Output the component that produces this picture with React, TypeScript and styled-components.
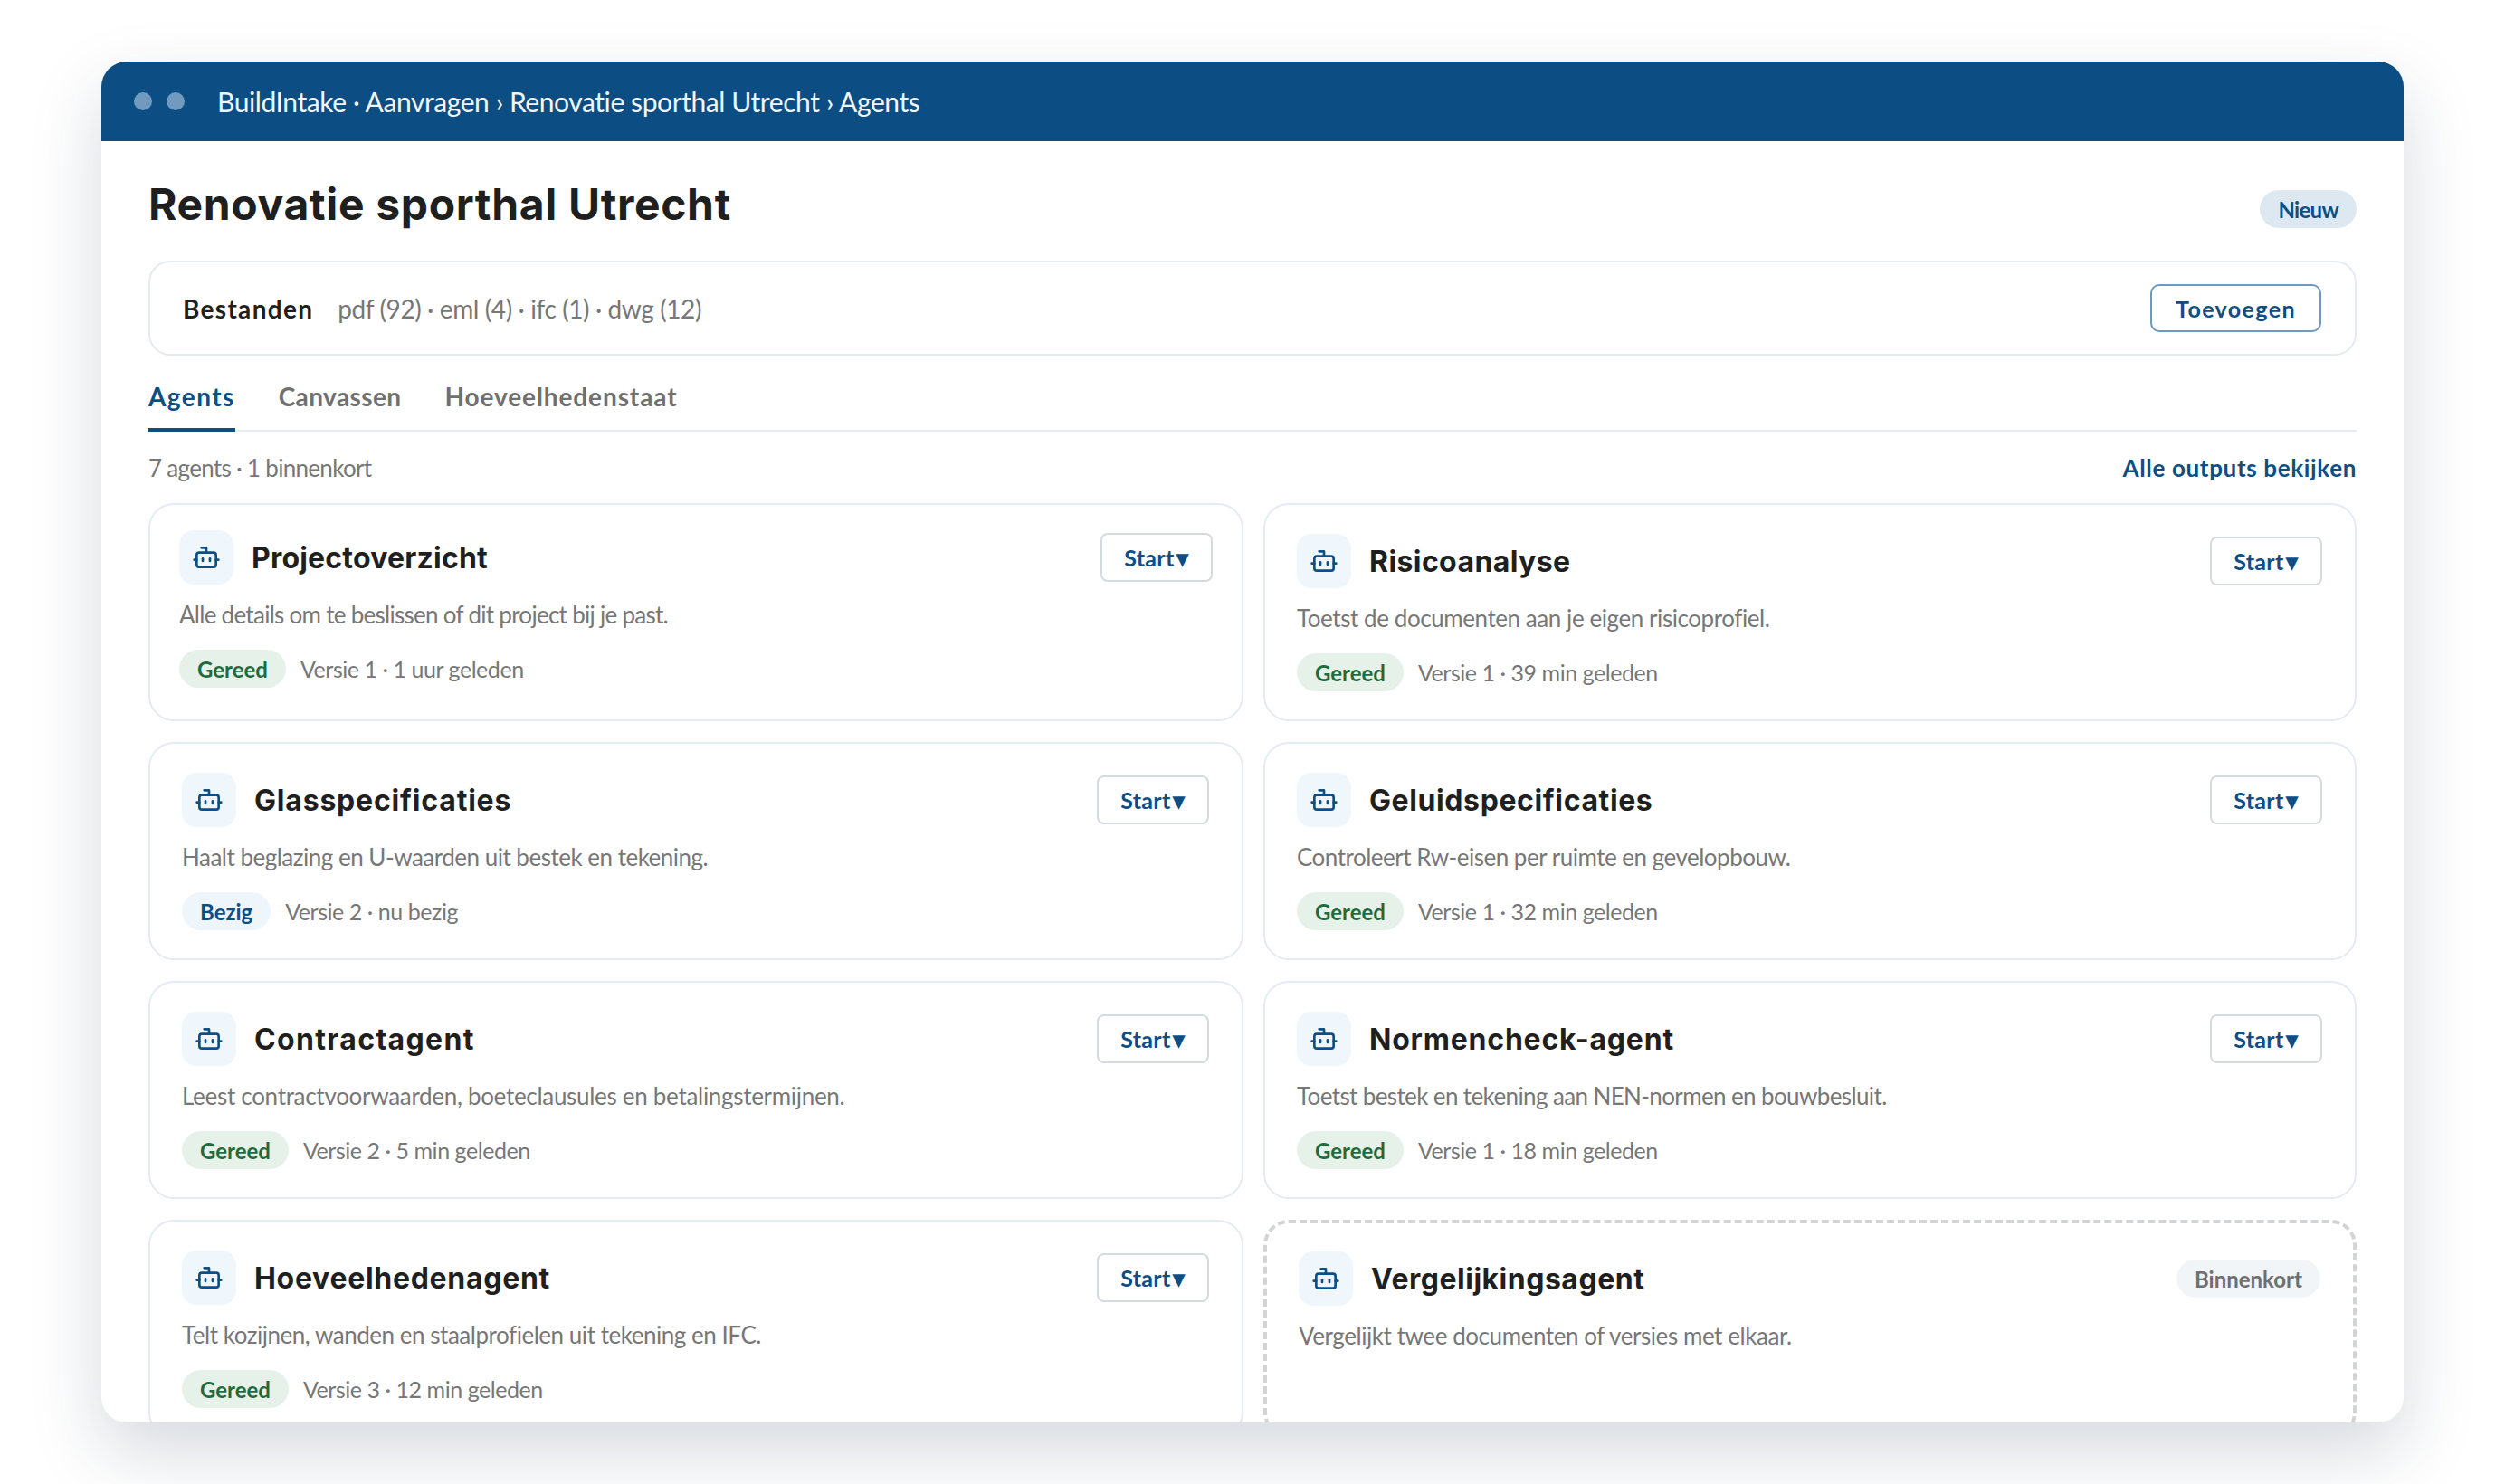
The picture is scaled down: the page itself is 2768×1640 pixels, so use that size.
import React from "react";
import styled, { createGlobalStyle } from "styled-components";
import { Bot } from "lucide-react";

const Global = createGlobalStyle`
  html, body { margin: 0; padding: 0; background: #fff; }
  body { font-family: "Lato", "Liberation Sans", sans-serif; }
  * { box-sizing: border-box; }
`;

const Page = styled.div`
  width: 2768px;
  height: 1640px;
  padding: 68px 112px;
  overflow: hidden;
  background: #fff;
`;

const Frame = styled.div`
  height: 1504px;
  border-radius: 28px;
  background: #fff;
  overflow: hidden;
  box-shadow: 0 32px 80px rgba(20, 45, 70, 0.18);
`;

const TitleBar = styled.header`
  height: 88px;
  background: #0c4e83;
  display: flex;
  align-items: center;
  padding: 0 36px;
  gap: 16px;
`;

const Dot = styled.span`
  width: 20px;
  height: 20px;
  border-radius: 50%;
  background: #719ac0;
`;

const Crumbs = styled.div`
  margin-left: 20px;
  font-size: 30px;
  letter-spacing: -0.42px;
  color: #f2f6fa;
`;

const Body = styled.main`
  padding: 0 52px;
`;

const TitleRow = styled.div`
  height: 132px;
  display: flex;
  align-items: center;
  justify-content: space-between;
`;

const Title = styled.h1`
  margin: 7px 0 0;
  font-family: "Inter", sans-serif;
  font-weight: 700;
  font-size: 48px;
  letter-spacing: 0.65px;
  color: #1f1f1f;
`;

const tones = {
  blue: { bg: "#dee8f1", fg: "#0d4f84" },
  sky: { bg: "#eef5fb", fg: "#0d4f84" },
  green: { bg: "#e6f1e9", fg: "#1f6b3d" },
  gray: { bg: "#f2f5f8", fg: "#6f6f6f" },
};

const Pill = styled.span<{ $tone: keyof typeof tones }>`
  height: 42px;
  padding: 0 20px;
  display: inline-flex;
  align-items: center;
  border-radius: 21px;
  font-size: 24px;
  font-weight: 700;
  background: ${(p) => tones[p.$tone].bg};
  color: ${(p) => tones[p.$tone].fg};
`;

const NewPill = styled(Pill)`
  margin-top: 18px;
  letter-spacing: -0.7px;
`;

const Files = styled.section`
  height: 105px;
  border: 2px solid #e5ebf2;
  border-radius: 24px;
  display: flex;
  align-items: center;
  padding: 0 37px 0 36px;
`;

const FilesLabel = styled.strong`
  font-size: 28px;
  font-weight: 700;
  letter-spacing: 1.3px;
  color: #1f1f1f;
`;

const FilesMeta = styled.span`
  margin-left: 27px;
  font-size: 28px;
  letter-spacing: -0.4px;
  color: #777;
  flex: 1;
`;

const AddButton = styled.button`
  width: 189px;
  height: 53px;
  background: #fff;
  border: 2px solid #6f98c0;
  border-radius: 10px;
  font: 700 25px "Lato", sans-serif;
  letter-spacing: 1.4px;
  color: #0d4f84;
  padding: 0;
`;

const Tabs = styled.nav`
  margin-top: 23px;
  height: 61px;
  display: flex;
  gap: 48px;
  border-bottom: 2px solid #e5ebf2;
`;

const Tab = styled.span<{ $active?: boolean; $track: number }>`
  height: 61px;
  padding-top: 5px;
  font-size: 28px;
  font-weight: 700;
  letter-spacing: ${(p) => p.$track}px;
  color: ${(p) => (p.$active ? "#0d4f84" : "#707070")};
  border-bottom: 4px solid ${(p) => (p.$active ? "#0d4f84" : "transparent")};
`;

const Summary = styled.div`
  height: 79px;
  display: flex;
  align-items: center;
  justify-content: space-between;
`;

const Count = styled.span`
  font-size: 26px;
  letter-spacing: -0.7px;
  color: #777;
`;

const AllLink = styled.span`
  font-size: 26px;
  font-weight: 700;
  letter-spacing: 0.65px;
  color: #0d4f84;
`;

const Grid = styled.div`
  display: grid;
  grid-template-columns: 1210px 1208px;
  grid-auto-rows: 241px;
  gap: 23px 22px;
`;

const Card = styled.article<{ $top: number; $left: number; $right: number; $soon?: boolean }>`
  border: ${(p) => (p.$soon ? "4px dashed #d2d4d6" : "2px solid #e5ebf2")};
  border-radius: 28px;
  padding: ${(p) => `${p.$top}px ${p.$right}px 0 ${p.$left}px`};
`;

const CardHead = styled.div`
  display: flex;
  align-items: center;
  gap: 20px;
`;

const IconTile = styled.div`
  width: 60px;
  height: 60px;
  border-radius: 16px;
  background: #eff6fc;
  color: #0d4f84;
  display: flex;
  align-items: center;
  justify-content: center;
`;

const CardTitle = styled.h2<{ $track: number }>`
  margin: 0;
  flex: 1;
  font-family: "Inter", sans-serif;
  font-size: 32px;
  font-weight: 700;
  letter-spacing: ${(p) => p.$track}px;
  color: #1f1f1f;
`;

const StartButton = styled.button`
  width: 124px;
  height: 54px;
  padding: 0;
  background: #fff;
  border: 2px solid #d3dae0;
  border-radius: 8px;
  font: 700 25px "Lato", sans-serif;
  letter-spacing: 0.3px;
  color: #0d4f84;
`;

const Caret = styled.span`
  margin-left: 3px;
  font-size: 26px;
  line-height: 1;
`;

const Desc = styled.p<{ $track: number }>`
  margin: 17px 0 0;
  font-size: 26px;
  line-height: 32px;
  letter-spacing: ${(p) => p.$track}px;
  color: #777;
`;

const Status = styled.div`
  margin-top: 23px;
  display: flex;
  align-items: center;
  gap: 16px;
`;

const Meta = styled.span`
  font-size: 25px;
  letter-spacing: -0.45px;
  color: #777;
`;

type Agent = {
  name: string;
  desc: string;
  state?: "Gereed" | "Bezig";
  meta?: string;
  top: number;
  left: number;
  right: number;
  nameTrack: number;
  descTrack: number;
  soon?: boolean;
};

const agents: Agent[] = [
  { name: "Projectoverzicht", desc: "Alle details om te beslissen of dit project bij je past.", state: "Gereed", meta: "Versie 1 · 1 uur geleden", top: 28, left: 32, right: 32, nameTrack: 0.2, descTrack: -0.72 },
  { name: "Risicoanalyse", desc: "Toetst de documenten aan je eigen risicoprofiel.", state: "Gereed", meta: "Versie 1 · 39 min geleden", top: 32, left: 35, right: 36, nameTrack: 0.4, descTrack: -0.43 },
  { name: "Glasspecificaties", desc: "Haalt beglazing en U-waarden uit bestek en tekening.", state: "Bezig", meta: "Versie 2 · nu bezig", top: 32, left: 35, right: 36, nameTrack: 0.8, descTrack: -0.5 },
  { name: "Geluidspecificaties", desc: "Controleert Rw-eisen per ruimte en gevelopbouw.", state: "Gereed", meta: "Versie 1 · 32 min geleden", top: 32, left: 35, right: 36, nameTrack: 0.6, descTrack: -0.5 },
  { name: "Contractagent", desc: "Leest contractvoorwaarden, boeteclausules en betalingstermijnen.", state: "Gereed", meta: "Versie 2 · 5 min geleden", top: 32, left: 35, right: 36, nameTrack: 1.35, descTrack: -0.3 },
  { name: "Normencheck-agent", desc: "Toetst bestek en tekening aan NEN-normen en bouwbesluit.", state: "Gereed", meta: "Versie 1 · 18 min geleden", top: 32, left: 35, right: 36, nameTrack: 0.8, descTrack: -0.62 },
  { name: "Hoeveelhedenagent", desc: "Telt kozijnen, wanden en staalprofielen uit tekening en IFC.", state: "Gereed", meta: "Versie 3 · 12 min geleden", top: 32, left: 35, right: 36, nameTrack: 0.7, descTrack: -0.47 },
  { name: "Vergelijkingsagent", desc: "Vergelijkt twee documenten of versies met elkaar.", top: 31, left: 35, right: 36, nameTrack: 0.5, descTrack: -0.43, soon: true },
];

export default function App() {
  return (
    <Page>
      <Global />
      <Frame>
        <TitleBar>
          <Dot />
          <Dot />
          <Crumbs>BuildIntake · Aanvragen › Renovatie sporthal Utrecht › Agents</Crumbs>
        </TitleBar>
        <Body>
          <TitleRow>
            <Title>Renovatie sporthal Utrecht</Title>
            <NewPill $tone="blue">Nieuw</NewPill>
          </TitleRow>
          <Files>
            <FilesLabel>Bestanden</FilesLabel>
            <FilesMeta>pdf (92) · eml (4) · ifc (1) · dwg (12)</FilesMeta>
            <AddButton>Toevoegen</AddButton>
          </Files>
          <Tabs>
            <Tab $active $track={1.4}>Agents</Tab>
            <Tab $track={0.4}>Canvassen</Tab>
            <Tab $track={0.9}>Hoeveelhedenstaat</Tab>
          </Tabs>
          <Summary>
            <Count>7 agents · 1 binnenkort</Count>
            <AllLink>Alle outputs bekijken</AllLink>
          </Summary>
          <Grid>
            {agents.map((a) => (
              <Card key={a.name} $top={a.top} $left={a.left} $right={a.right} $soon={a.soon}>
                <CardHead>
                  <IconTile>
                    <Bot size={32} strokeWidth={2} />
                  </IconTile>
                  <CardTitle $track={a.nameTrack}>{a.name}</CardTitle>
                  {a.soon ? (
                    <Pill $tone="gray">Binnenkort</Pill>
                  ) : (
                    <StartButton>
                      Start<Caret>▾</Caret>
                    </StartButton>
                  )}
                </CardHead>
                <Desc $track={a.descTrack}>{a.desc}</Desc>
                {a.state && (
                  <Status>
                    <Pill $tone={a.state === "Gereed" ? "green" : "sky"}>{a.state}</Pill>
                    <Meta>{a.meta}</Meta>
                  </Status>
                )}
              </Card>
            ))}
          </Grid>
        </Body>
      </Frame>
    </Page>
  );
}
